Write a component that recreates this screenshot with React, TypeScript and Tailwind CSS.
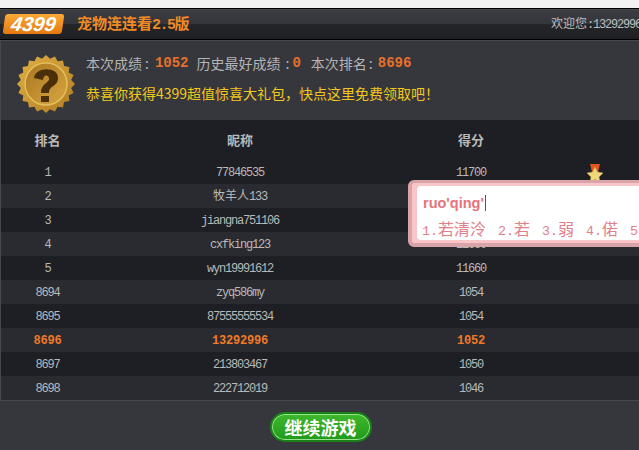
import React from "react";

const monoBase = "font-['Liberation_Mono','Noto_Sans_CJK_SC',monospace] text-[12px]";
const mono = `${monoBase} tracking-[-1.2px]`;
const num = "font-['Liberation_Mono',monospace] text-[14px] font-bold text-[#e8702a]";

type Row = { rank: string; name: React.ReactNode; score: string; me?: boolean; star?: boolean };

const rows: Row[] = [
  { rank: "1", name: "77846535", score: "11700", star: true },
  { rank: "2", name: <><span className="tracking-normal">牧羊人</span>133</>, score: "11690" },
  { rank: "3", name: "jiangna751106", score: "11680" },
  { rank: "4", name: "cxfking123", score: "11680" },
  { rank: "5", name: "wyn19991612", score: "11660" },
  { rank: "8694", name: "zyq586my", score: "1054" },
  { rank: "8695", name: "87555555534", score: "1054" },
  { rank: "8696", name: "13292996", score: "1052", me: true },
  { rank: "8697", name: "213803467", score: "1050" },
  { rank: "8698", name: "222712019", score: "1046" },
];

function Logo() {
  return (
    <div className="flex h-[20px] w-[59px] -skew-x-[8deg] items-center justify-center rounded-[3px] bg-gradient-to-b from-[#fbaa35] to-[#e2780f]">
      <span className="font-['Liberation_Sans',sans-serif] text-[20px] font-bold italic leading-none text-white">4399</span>
    </div>
  );
}

function Medal() {
  const teeth = Array.from({ length: 20 }, (_, i) => {
    const a = (i / 20) * Math.PI * 2;
    const b = ((i + 0.5) / 20) * Math.PI * 2;
    return `${29 + 29 * Math.cos(a)},${29 + 29 * Math.sin(a)} ${29 + 25.5 * Math.cos(b)},${29 + 25.5 * Math.sin(b)}`;
  }).join(" ");
  return (
    <svg width="58" height="58" viewBox="0 0 58 58" className="mt-[6px] shrink-0">
      <defs>
        <linearGradient id="m1" x1="0" y1="0" x2="1" y2="1">
          <stop offset="0" stopColor="#e0b043" />
          <stop offset="1" stopColor="#b07d24" />
        </linearGradient>
        <linearGradient id="m2" x1="0" y1="0" x2="1" y2="1">
          <stop offset="0" stopColor="#a97720" />
          <stop offset="1" stopColor="#d8a640" />
        </linearGradient>
      </defs>
      <polygon points={teeth} fill="url(#m1)" />
      <circle cx="29" cy="29" r="21" fill="url(#m2)" stroke="#e6bd5c" strokeWidth="1.5" />
      <path d="M17 23 C18 12 41 11 41 23 C41 32 32 30 32 38 L24 38 C24 28 33 28 32 23 C31 19 26 20 26 25 Z" fill="#4a2f08" />
      <rect x="24" y="41" width="8" height="6" fill="#4a2f08" />
    </svg>
  );
}

function Star() {
  return (
    <svg width="18" height="20" viewBox="0 0 18 20">
      <path d="M4 1 H14 L12 9 H6 Z" fill="#e5531d" />
      <path d="M9 4 L11.4 9 L17 10 L13 14 L14 19 L9 16.5 L4 19 L5 14 L1 10 L6.6 9 Z" fill="#f0d77c" stroke="#c9a94a" strokeWidth="0.5" />
    </svg>
  );
}

function Cols({ a, b, c, d, className = "" }: { a: React.ReactNode; b: React.ReactNode; c: React.ReactNode; d?: React.ReactNode; className?: string }) {
  return (
    <div className={`grid grid-cols-[93px_292px_170px_77px] items-center text-center ${className}`}>
      <div>{a}</div>
      <div>{b}</div>
      <div>{c}</div>
      <div className="flex justify-center">{d}</div>
    </div>
  );
}

export default function App() {
  return (
    <div className="relative h-[450px] w-[639px] overflow-hidden bg-[#f2f2f2] font-['Noto_Sans_CJK_SC',sans-serif]">
      <div className="h-2" />
      <div className="flex h-[32px] items-center justify-between border-y border-black bg-[linear-gradient(#55565a_0,#3c3d42_1px,#35363b_50%,#25262a_50%,#1e1f23_100%)] pl-[4px]">
        <div className="flex items-center">
          <Logo />
          <h1 className="ml-[14px] text-[15px] font-bold leading-none text-[#f08a24]">
            宠物连连看<span className="font-['Liberation_Mono',monospace] tracking-[-1.5px]">2.5</span>版
          </h1>
        </div>
        <div className="w-[88px] shrink-0 overflow-hidden whitespace-nowrap text-[12px] leading-none text-[#bdbdbd]">
          欢迎您<span className={mono}>:13292996</span>
        </div>
      </div>

      <div className="flex h-[80px] items-center gap-[11px] border-t border-l border-[#47484d] bg-[#36373c] pl-[16px]">
        <Medal />
        <div className="flex flex-col gap-[13px] pb-[4px] text-[14px] leading-[17px]">
          <p className="flex h-[17px] items-center whitespace-nowrap text-[#b4b4b4]">
            <span>本次成绩</span><span className="ml-[3px]">:</span><b className={`${num} ml-[6px]`}>1052</b>
            <span className="ml-[8px]">历史最好成绩</span><span className="ml-[5px]">:</span><b className={`${num} ml-[3px]`}>0</b>
            <span className="ml-[10px]">本次排名</span><span className="ml-[2px]">:</span><b className={`${num} ml-[5px]`}>8696</b>
          </p>
          <p className="h-[17px] whitespace-nowrap text-[#f2c81e]">{"恭喜你获得4399超值惊喜大礼包\uFF0C快点这里免费领取吧\uFF01"}</p>
        </div>
      </div>

      <div className="border-l border-l-[#47484d] bg-[#1e1f24] text-[#b9b9b9]">
        <Cols className="h-[40px] pb-[1px] text-[13px] font-bold" a="排名" b="昵称" c="得分" />
        {rows.map((r, i) => (
          <Cols
            key={r.rank}
            className={`h-[24px] pt-[1px] ${r.me ? `${monoBase} tracking-[-0.2px] font-bold text-[#f07a28]` : mono} ${i % 2 ? "bg-[#2a2b30]" : "bg-[#1e1f24]"}`}
            a={r.rank}
            b={r.name}
            c={r.score}
            d={r.star ? <Star /> : undefined}
          />
        ))}
      </div>

      <div className="flex h-[50px] items-center justify-center border-t border-[#47484d] bg-[#36373c] pt-[2px] pl-[2px]">
        <button className="flex h-[30px] w-[102px] items-center justify-center rounded-full border-[2px] border-[#19801a] bg-gradient-to-b from-[#3fb82c] to-[#1f9a1c] text-[18px] font-bold leading-none text-white shadow-[inset_0_0_0_1px_#9be08c]">
          继续游戏
        </button>
      </div>

      <div className="absolute left-[408px] top-[180px] h-[67px] w-[260px] rounded-[6px] border-x-[4px] border-t-[3px] border-b-[4px] border-[#d9a3a7] bg-[#f8c6c8] px-[5px] py-[3px]">
        <div className="h-[54px] rounded-[4px] bg-white pl-[5px]">
          <div className="ml-[1px] flex h-[34px] items-center font-['Liberation_Sans',sans-serif] text-[14.5px] font-bold leading-none text-[#e8727a]">
            ruo'qing'<span className="ml-[1px] h-[16px] w-px bg-[#555]" />
          </div>
          <div className="flex h-[18px] items-center gap-[12px] whitespace-nowrap text-[16px] leading-none text-[#e0808a]">
            {[["1.", "若清泠"], ["2.", "若"], ["3.", "弱"], ["4.", "偌"], ["5", ""]].map(([n, w]) => (
              <span key={n}><span className="font-['Liberation_Mono',monospace] text-[13.33px]">{n}</span>{w}</span>
            ))}
          </div>
        </div>
      </div>
    </div>
  );
}
